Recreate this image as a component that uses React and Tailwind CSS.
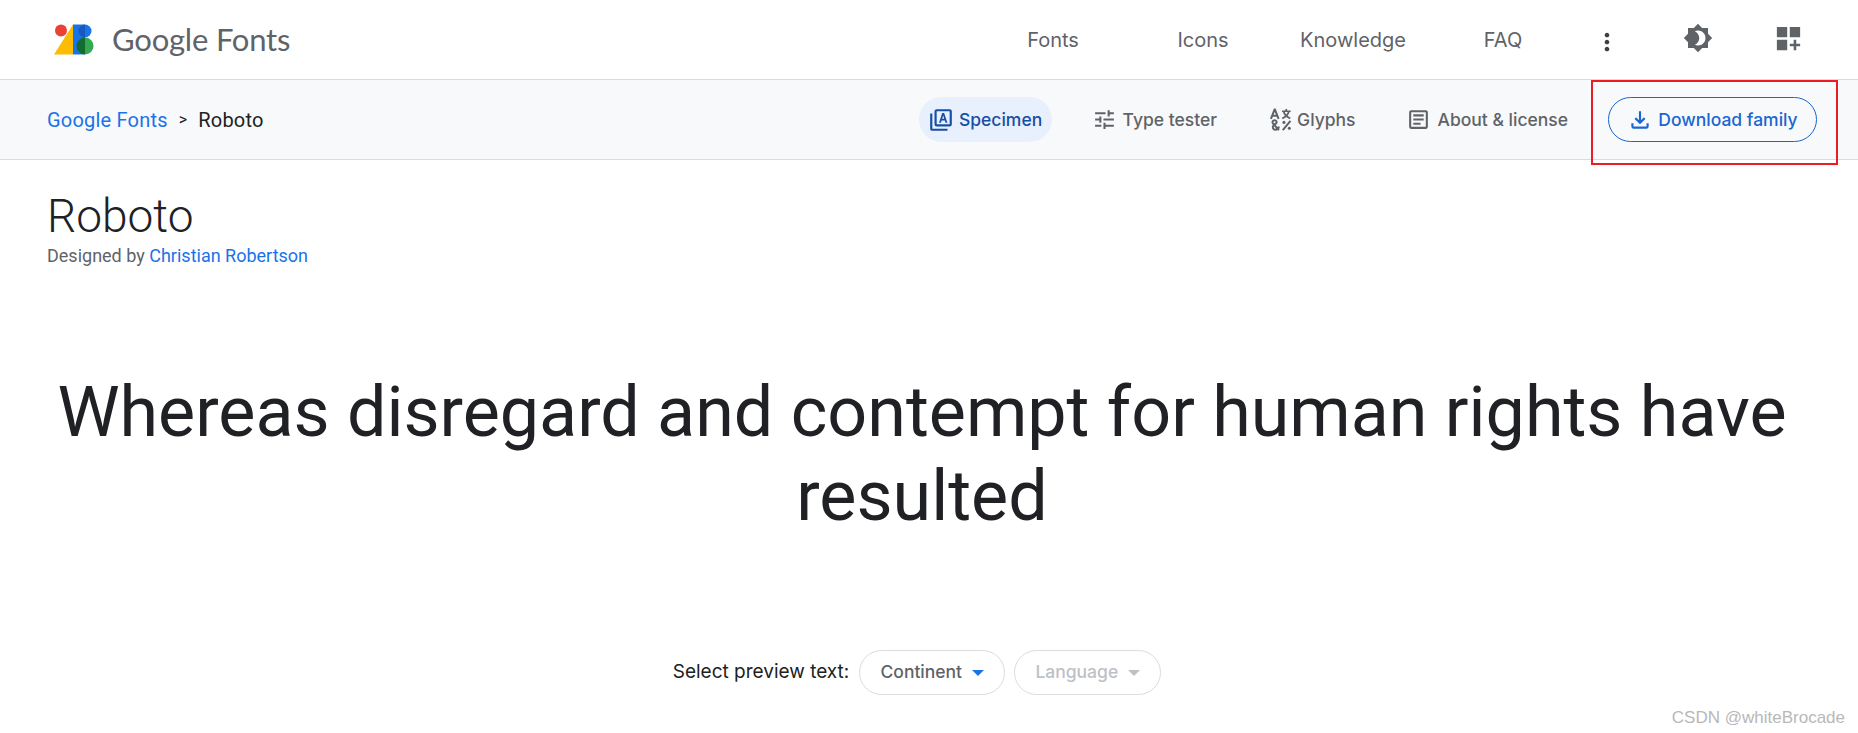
function Icon({ className, children }) {
   return (
      <svg viewBox="0 0 24 24" fill="currentColor" className={className}>
         {children}
      </svg>
   );
}

function Logo() {
   return (
      <svg viewBox="0 0 40 31" className="h-[31px] w-[40px]">
         <circle cx="7" cy="6.5" r="6" fill="#ea4335" />
         <path d="M19 0.5V30.5H0Z" fill="#fbbc04" />
         <path d="M19 0.5H31V30.5H19Z" fill="#1a73e8" />
         <path d="M31 0.5a6.5 6.5 0 0 1 0 13Z" fill="#1a73e8" />
         <path d="M31 0.5a6.5 6.5 0 0 0 0 13Z" fill="#185abc" />
         <path d="M31 13.5a8.5 8.5 0 0 1 0 17Z" fill="#34a853" />
         <path d="M31 13.5a8.5 8.5 0 0 0 0 17Z" fill="#146c2e" />
      </svg>
   );
}

const navLinks = ['Fonts', 'Icons', 'Knowledge', 'FAQ'];

function SpecimenIcon({ className }) {
   return (
      <Icon className={className}>
         <path d="M20 2H8a2 2 0 0 0-2 2v12a2 2 0 0 0 2 2h12a2 2 0 0 0 2-2V4a2 2 0 0 0-2-2zm0 14H8V4h12v12z" />
         <path d="M2 6h2v14h14v2H4a2 2 0 0 1-2-2V6z" />
         <path d="M13.1 5.5h1.8l3 9h-1.7l-.7-2.1h-2.9l-.7 2.1h-1.7l2.9-9zm.9 2.3-.95 3.1h1.9L14 7.8z" />
      </Icon>
   );
}

function TuneIcon({ className }) {
   return (
      <Icon className={className}>
         <path d="M3 17v2h6v-2H3zM3 5v2h10V5H3zm10 16v-2h8v-2h-8v-2h-2v6h2zM7 9v2H3v2h4v2h2V9H7zm14 4v-2H11v2h10zm-6-4h2V7h4V5h-4V3h-2v6z" />
      </Icon>
   );
}

function GlyphsIcon({ className }) {
   return (
      <svg
         viewBox="0 0 24 24"
         fill="none"
         stroke="currentColor"
         strokeWidth="2.1"
         className={className}
      >
         <path d="M2 11.4 5.8 1.6h.4L10 11.4M3.4 8.2h5.2" />
         <path d="M13.6 3.4h9M18 1v2.4M15.2 3.6c.8 3 3.6 5.6 7 7.4M20.8 3.6c-.8 3-3.6 5.6-7 7.4" strokeWidth="1.8" />
         <path d="M10.4 23 4.4 16.6c-1.6-1.8-.6-3.8 1.4-3.8s3 1.9 1.4 3.5l-2 1.5c-2.4 2-1 5 1.5 5 1.9 0 3.2-1.2 3.7-3.4" />
         <path d="M22.4 13.4 14.4 23" />
         <circle cx="15.6" cy="15" r="1.6" fill="currentColor" stroke="none" />
         <circle cx="21.2" cy="21.2" r="1.6" fill="currentColor" stroke="none" />
      </svg>
   );
}

function ArticleIcon({ className }) {
   return (
      <Icon className={className}>
         <path d="M19 5v14H5V5h14m0-2H5c-1.1 0-2 .9-2 2v14c0 1.1.9 2 2 2h14c1.1 0 2-.9 2-2V5c0-1.1-.9-2-2-2z" />
         <path d="M14 17H7v-2h7v2zm3-4H7v-2h10v2zm0-4H7V7h10v2z" />
      </Icon>
   );
}

function App() {
   return (
      <div className="relative h-[733px] w-[1858px] overflow-hidden bg-white font-['Roboto',sans-serif] text-[#202124]">
         <header className="flex h-[80px] items-center border-b border-[#dadce0] pb-px">
            <a className="ml-[54px] flex items-center">
               <Logo />
               <span className="ml-[18px] font-['Lato',sans-serif] text-[31px] leading-none tracking-[-0.2px] text-[#5f6368]">
                  Google Fonts
               </span>
            </a>
            <nav className="ml-auto flex items-center pt-px">
               {navLinks.map((link) => (
                  <a
                     key={link}
                     className="w-[150px] text-center font-['Inter',sans-serif] text-[20px] text-[#5f6368]"
                  >
                     {link}
                  </a>
               ))}
            </nav>
            <div className="mr-[25px] flex items-center">
               <div className="flex w-[75px] justify-center pr-[18px] pt-[6px]">
                  <Icon className="h-7 w-7 shrink-0 text-[#3c4043]">
                     <path d="M12 8c1.1 0 2-.9 2-2s-.9-2-2-2-2 .9-2 2 .9 2 2 2zm0 2c-1.1 0-2 .9-2 2s.9 2 2 2 2-.9 2-2-.9-2-2-2zm0 6c-1.1 0-2 .9-2 2s.9 2 2 2 2-.9 2-2-.9-2-2-2z" />
                  </Icon>
               </div>
               <div className="flex w-[90px] justify-center">
                  <Icon className="mb-0.5 h-[30px] w-[30px] text-[#5f6368]">
                     <path d="M20 8.69V4h-4.69L12 .69 8.69 4H4v4.69L.69 12 4 15.31V20h4.69L12 23.31 15.31 20H20v-4.69L23.31 12 20 8.69zM12 18c-.89 0-1.74-.2-2.5-.55C11.56 16.5 13 14.42 13 12s-1.44-4.5-3.5-5.45C10.26 6.2 11.11 6 12 6c3.31 0 6 2.69 6 6s-2.69 6-6 6z" />
                  </Icon>
               </div>
               <div className="flex w-[90px] justify-center">
                  <Icon className="mb-0.5 h-[31px] w-[31px] text-[#5f6368]">
                     <path d="M3 3h8v8H3zM13 3h8v8h-8zM3 13h8v8H3zM16 13h2v3h3v2h-3v3h-2v-3h-3v-2h3z" />
                  </Icon>
               </div>
            </div>
         </header>

         <div className="flex h-[80px] items-center border-b border-[#dadce0] bg-[#f8f9fa] pl-[47px] pr-[41px]">
            <div className="flex items-center text-[20px] tracking-[0.2px]">
               <a className="text-[#1a73e8]">Google Fonts</a>
               <span className="mx-[11px] text-[16px]">&gt;</span>
               <span>Roboto</span>
            </div>
            <div className="ml-auto flex items-center font-['Inter',sans-serif] text-[17.5px] font-medium text-[#5f6368]">
               <a className="flex h-[45px] w-[133px] items-center justify-center gap-[5px] rounded-full bg-[#e8f0fe] text-[#174ea6]">
                  <SpecimenIcon className="h-[26px] w-[26px]" />
                  <span className="pt-px">Specimen</span>
               </a>
               <a className="ml-[40px] flex items-center gap-[6px]">
                  <TuneIcon className="h-[25px] w-[25px]" />
                  <span className="pt-px">Type tester</span>
               </a>
               <a className="ml-[52px] flex items-center gap-[5px]">
                  <GlyphsIcon className="h-[23px] w-[23px]" />
                  <span className="pt-px">Glyphs</span>
               </a>
               <a className="ml-[50px] flex items-center gap-[7px]">
                  <ArticleIcon className="h-[25px] w-[25px]" />
                  <span className="pt-px">About &amp; license</span>
               </a>
               <button className="ml-[40px] flex h-[45px] w-[209px] items-center justify-center gap-[5px] rounded-full border border-[#1a66c9] text-[#1a66d2]">
                  <Icon className="h-[26px] w-[26px]">
                     <path d="M12 16l-5-5 1.4-1.45 2.6 2.6V4h2v8.15l2.6-2.6L17 11l-5 5zm-6 4c-.55 0-1.02-.2-1.41-.59S4 18.55 4 18v-3h2v3h12v-3h2v3c0 .55-.2 1.02-.59 1.41S18.55 20 18 20H6z" />
                  </Icon>
                  <span className="pt-px">Download family</span>
               </button>
            </div>
         </div>

         <section className="px-[47px] pt-[31px]">
            <h1 className="text-[46px] font-light leading-[50px] text-[#202124]">
               Roboto
            </h1>
            <p className="pt-[3px] text-[18px] leading-[24px] text-[#5f6368]">
               Designed by <a className="text-[#1a73e8]">Christian Robertson</a>
            </p>
         </section>

         <p className="ml-[42px] mt-[102px] w-[1760px] text-center text-[70px] leading-[84px] text-[#202124]">
            Whereas disregard and contempt for human rights have resulted
         </p>

         <div className="mt-[112px] flex items-center justify-center pr-[24px]">
            <span className="font-['Inter',sans-serif] text-[19px] text-[#202124]">
               Select preview text:
            </span>
            <button className="ml-[10px] flex h-[45px] w-[146px] items-center justify-center gap-[10px] rounded-full border border-[#dadce0] font-['Inter',sans-serif] text-[17.5px] font-medium text-[#5f6368]">
               Continent
               <span className="h-0 w-0 border-x-[6px] border-t-[6px] border-x-transparent border-t-[#1a73e8]" />
            </button>
            <button className="ml-[9px] flex h-[45px] w-[147px] items-center justify-center gap-[10px] rounded-full border border-[#dadce0] font-['Inter',sans-serif] text-[17.5px] font-medium text-[#bdc1c6]">
               Language
               <span className="h-0 w-0 border-x-[6px] border-t-[6px] border-x-transparent border-t-[#bdc1c6]" />
            </button>
         </div>

         <div className="absolute left-[1591px] top-[80px] h-[85px] w-[247px] border-2 border-[#ed1c24]" />
         <span className="absolute bottom-[3px] right-[13px] font-['Liberation_Sans',sans-serif] text-[17px] text-[#b8b8b8]">
            CSDN @whiteBrocade
         </span>
      </div>
   );
}

export default App;
